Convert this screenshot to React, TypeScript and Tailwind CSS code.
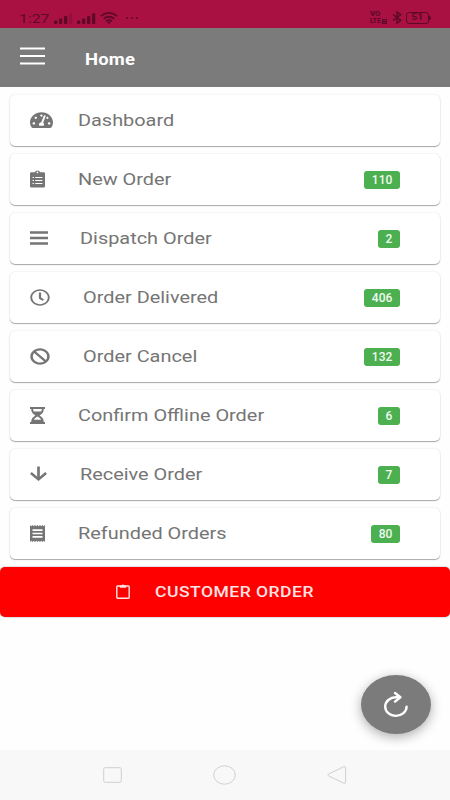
import React from "react";
import { FaBan, FaRegClock, FaTachometerAlt } from "react-icons/fa";
import { MdReceipt } from "react-icons/md";

const ClipboardListIcon = () => (
  <svg viewBox="0 0 15 18" className="w-[15px] h-[18px]" fill="none">
    <path
      fill="currentColor"
      fillRule="evenodd"
      d="M1.3 2.3H4.8A2.8 2.3 0 0 1 10.2 2.3H13.7Q15 2.3 15 3.6V16.2Q15 17.5 13.7 17.5H1.3Q0 17.5 0 16.2V3.6Q0 2.3 1.3 2.3ZM7.5 1.5A.9 .9 0 1 0 7.5 3.3A.9 .9 0 1 0 7.5 1.5Z"
    />
    <path
      stroke="#fff"
      strokeWidth="1.2"
      d="M2.6 7.5H4M5.3 7.5H12.4M2.6 10.5H4M5.3 10.5H12.4M2.6 13.5H4M5.3 13.5H12.4"
    />
  </svg>
);

const BarsIcon = () => (
  <svg viewBox="0 0 18 14" className="w-[18px] h-[14px]" stroke="currentColor" strokeWidth="2.4">
    <path d="M0 1.5H18M0 7H18M0 12.5H18" />
  </svg>
);

const HourglassIcon = () => (
  <svg viewBox="0 0 15 17" className="w-[15px] h-[17px]" fill="currentColor">
    <path
      fillRule="evenodd"
      d="M0 0H15V2H13.8C13.8 5.2 12 7 9.6 8.5C12 10 13.8 11.8 13.8 15H15V17H0V15H1.2C1.2 11.8 3 10 5.4 8.5C3 7 1.2 5.2 1.2 2H0ZM3.1 2.1C3.2 3.1 3.4 3.7 3.8 4.4H11.2C11.6 3.7 11.8 3.1 11.9 2.1ZM7.5 9.6C5.7 10.5 4.6 11.5 3.9 12.8H11.1C10.4 11.5 9.3 10.5 7.5 9.6Z"
    />
  </svg>
);

const ArrowDownIcon = () => (
  <svg viewBox="0 0 17 16" className="w-[17px] h-[16px]" fill="none" stroke="currentColor">
    <path strokeWidth="2.7" d="M8.5 0.5V13" />
    <path strokeWidth="2.6" d="M0.9 7L8.5 13.4L16.1 7" />
  </svg>
);

interface MenuItem {
  label: string;
  count?: number;
  icon: React.ReactNode;
  labelClass: string;
}

const items: MenuItem[] = [
  {
    label: "Dashboard",
    icon: <FaTachometerAlt preserveAspectRatio="none" className="w-[23px] h-[18px]" />,
    labelClass: "w-[48px]",
  },
  { label: "New Order", count: 110, icon: <ClipboardListIcon />, labelClass: "w-[48px]" },
  { label: "Dispatch Order", count: 2, icon: <BarsIcon />, labelClass: "w-[50px]" },
  {
    label: "Order Delivered",
    count: 406,
    icon: <FaRegClock preserveAspectRatio="none" className="w-[20px] h-[17px]" />,
    labelClass: "w-[53px]",
  },
  {
    label: "Order Cancel",
    count: 132,
    icon: <FaBan preserveAspectRatio="none" className="w-[20px] h-[17px]" />,
    labelClass: "w-[53px]",
  },
  { label: "Confirm Offline Order", count: 6, icon: <HourglassIcon />, labelClass: "w-[48px]" },
  { label: "Receive Order", count: 7, icon: <ArrowDownIcon />, labelClass: "w-[50px]" },
  {
    label: "Refunded Orders",
    count: 80,
    icon: (
      <MdReceipt viewBox="3 2 18 20" preserveAspectRatio="none" className="w-[15px] h-[17px]" />
    ),
    labelClass: "w-[48px]",
  },
];

const MenuCard: React.FC<{ item: MenuItem }> = ({ item }) => (
  <div className="flex h-[51px] items-center rounded-[5px] bg-white pb-px pl-5 pr-10 text-[#757575] shadow-[0_1px_1px_rgba(0,0,0,0.32),0_0_2px_rgba(0,0,0,0.12)]">
    <div className={`${item.labelClass} shrink-0`}>{item.icon}</div>
    <span className="origin-left scale-x-[1.17] whitespace-nowrap text-[17px] leading-5">
      {item.label}
    </span>
    {item.count !== undefined && (
      <span className="ml-auto mt-[2px] flex h-[18px] items-center rounded-[3px] bg-[#4caf50] px-[7.5px] text-[12px] font-medium leading-none tracking-[0.1px] text-[#f0f9f0]">
        {item.count}
      </span>
    )}
  </div>
);

const Signal = ({ weak }: { weak?: boolean }) => (
  <svg viewBox="0 0 19 11" className="w-[19px] h-[11px]" fill="currentColor">
    <rect x="0" y="7.5" width="3.3" height="3.5" rx="1" />
    <rect x="5" y="5.5" width="3.3" height="5.5" rx="1" />
    <rect x="10" y="3" width="3.3" height="8" rx="1" />
    <rect x="15" y="0.3" width="3.3" height="10.7" rx="1" opacity={weak ? 0.25 : 1} />
  </svg>
);

const StatusBar = () => (
  <div className="flex h-7 items-end bg-[#a91143] pb-1 pl-[19px] pr-[19px] text-[#5f0929]">
    <span className="w-[35px] origin-left scale-x-[1.17] text-[13.5px] leading-[11px]">1:27</span>
    <div className="flex items-end gap-1">
      <Signal weak />
      <Signal />
      <svg viewBox="0 0 18 12" className="w-[18px] h-[12px]" fill="none" stroke="currentColor">
        <path strokeWidth="1.8" d="M0.8 4.1Q9 -2.3 17.2 4.1M3.6 6.8Q9 2.6 14.4 6.8" />
        <path strokeWidth="1.8" d="M6 9.2Q9 7 12 9.2" />
        <path fill="currentColor" stroke="none" d="M7 10.2Q9 8.8 11 10.2L9 12Z" />
      </svg>
    </div>
    <svg viewBox="0 0 12 2" className="mb-[5px] ml-[8px] w-[12px] h-[2px]" fill="currentColor">
      <circle cx="1.2" cy="1" r="1" />
      <circle cx="6" cy="1" r="1" />
      <circle cx="10.8" cy="1" r="1" />
    </svg>
    <div className="ml-auto flex items-center gap-1">
      <div className="-mb-px flex w-[18px] flex-col text-[6.5px] font-black">
        <span className="h-[7px] origin-left scale-x-[1.2] leading-[7px]">VO</span>
        <span className="flex h-[7px] items-center leading-[7px]">
          LTE
          <svg viewBox="0 0 5 5" className="ml-px w-[5px] h-[5px]" fill="none" stroke="currentColor">
            <path strokeWidth="1.2" d="M0.6 0.6H4.4V4.4H0.6ZM0.6 2.5H4.4" />
          </svg>
        </span>
      </div>
      <svg viewBox="0 0 10 13" className="w-[10px] h-[13px]" fill="none" stroke="currentColor" strokeWidth="1.5">
        <path d="M1 3.5L8.8 9.3L5 12.2V0.8L8.8 3.7L1 9.5" />
      </svg>
      <div className="flex items-center">
        <span className="flex h-[12px] w-[23px] items-center justify-center rounded-[3px] border border-current text-[9px] font-bold leading-none">
          <span className="scale-x-[1.15]">51</span>
        </span>
        <span className="h-[4px] w-[2px] rounded-r bg-current" />
      </div>
    </div>
  </div>
);

const Header = () => (
  <header className="flex h-[59px] items-center bg-[#7b7b7b] pl-5 text-white">
    <svg viewBox="0 0 25 18" className="mb-[3px] w-[25px] h-[18px]" stroke="currentColor" strokeWidth="2">
      <path d="M0 1.5H25M0 9H25M0 16.5H25" />
    </svg>
    <h1 className="ml-[40px] mt-[4px] origin-left scale-x-[1.15] text-[16px] font-bold leading-5 tracking-[0.2px]">
      Home
    </h1>
  </header>
);

const NavBar = () => (
  <nav className="flex h-[50px] items-center justify-between bg-[#f8f8f8] pl-[103px] pr-[103px] text-[#cfcfcf]">
    <svg viewBox="0 0 19 16" className="w-[19px] h-[16px]" fill="none" stroke="currentColor">
      <rect x="0.7" y="0.7" width="17.6" height="14.6" rx="1.5" />
    </svg>
    <svg viewBox="0 0 23 20" className="w-[23px] h-[20px]" fill="none" stroke="currentColor">
      <ellipse cx="11.5" cy="10" rx="10.8" ry="9.2" />
    </svg>
    <svg viewBox="0 0 20 18" className="w-[20px] h-[18px]" fill="none" stroke="currentColor">
      <path d="M1.3 8.2L16.5 0.8Q18.6 0 18.6 2V16Q18.6 18 16.5 17.1L1.3 9.7Q0.3 9 1.3 8.2Z" />
    </svg>
  </nav>
);

const App: React.FC = () => {
  return (
    <div className="flex h-[800px] w-[450px] flex-col overflow-hidden bg-[#fefefe] font-[Roboto,sans-serif]">
      <StatusBar />
      <Header />
      <main className="flex flex-1 flex-col">
        <div className="flex flex-col gap-2 px-[10px] pt-2">
          {items.map((item) => (
            <MenuCard key={item.label} item={item} />
          ))}
        </div>
        <button className="mt-2 flex h-[50px] items-center rounded-[5px] bg-[#fe0000] pl-[116px] text-[#ffe3e3] shadow-[0_0_2px_rgba(0,0,0,0.4)]">
          <svg viewBox="0 0 14 15" className="mb-[2px] w-[14px] h-[15px]" fill="none" stroke="currentColor">
            <rect x="0.8" y="2" width="12.4" height="12.2" rx="0.8" strokeWidth="1.4" />
            <path fill="currentColor" stroke="none" d="M3.8 1.6H5.4Q7 -0.8 8.6 1.6H10.2V3.8H3.8Z" />
          </svg>
          <span className="ml-[25px] origin-left scale-x-[1.17] whitespace-nowrap text-[15px] font-medium leading-5 tracking-[0.4px]">
            CUSTOMER ORDER
          </span>
        </button>
        <div className="mb-4 mr-[19px] mt-auto flex h-[59px] w-[70px] items-center justify-center self-end rounded-[50%] bg-[#7b7b7b] text-white shadow-[0_3px_12px_rgba(0,0,0,0.32)]">
          <svg
            viewBox="0 0 24 25"
            className="w-[24px] h-[25px] overflow-visible"
            fill="none"
            stroke="currentColor"
            strokeWidth="2.4"
            strokeLinecap="round"
          >
            <path d="M22.6 14.6A10.7 9.3 0 1 1 12 5.3H15.5" />
            <path strokeLinejoin="round" d="M11 1L16.4 5.3L11 9.6" />
          </svg>
        </div>
      </main>
      <NavBar />
    </div>
  );
};

export default App;
